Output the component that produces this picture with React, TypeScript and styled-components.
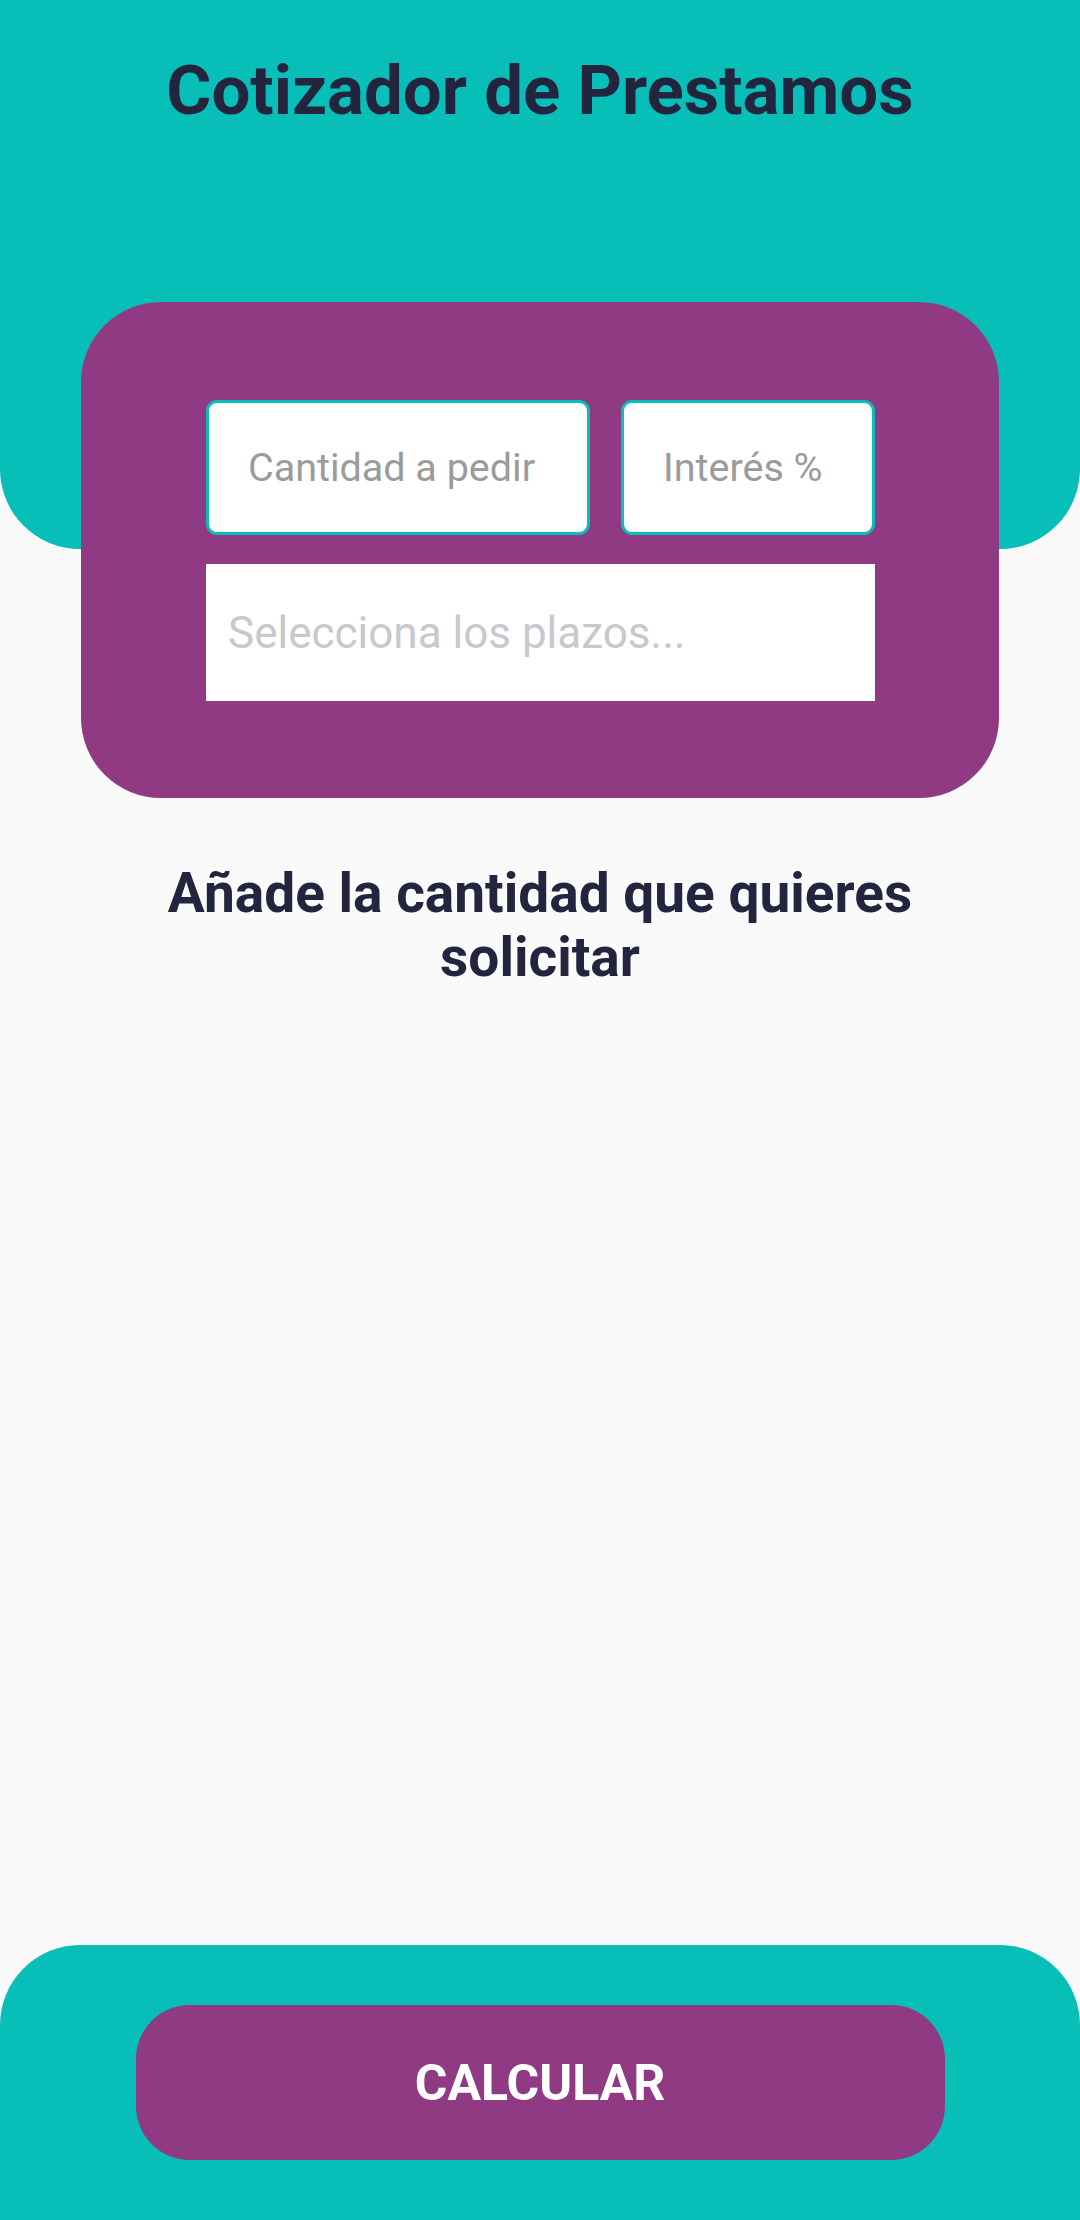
import React from "react";
import styled, { createGlobalStyle } from "styled-components";

const TEAL = "#08beb9";
const PURPLE = "#8f3a82";
const DARK = "#23243d";

const GlobalStyle = createGlobalStyle`
  html, body { margin: 0; padding: 0; background: #fafafa; }
  * { box-sizing: border-box; }
  body { font-family: Roboto, "Noto Sans", sans-serif; }
`;

const Page = styled.div`
  min-height: 2220px;
  display: flex;
  flex-direction: column;
  background: #fafafa;
`;

const Header = styled.header`
  height: 549px;
  background: ${TEAL};
  border-radius: 0 0 80px 80px;
  padding-top: 50px;
  display: flex;
  justify-content: center;
  align-items: flex-start;
`;

const Title = styled.h1`
  margin: 0;
  font-family: Roboto, sans-serif;
  font-weight: 700;
  font-size: 69px;
  line-height: normal;
  color: ${DARK};
`;

const Card = styled.section`
  margin: -247px 81px 0;
  position: relative;
  background: ${PURPLE};
  border-radius: 80px;
  padding: 98px 124px 97px 125px;
  display: flex;
  flex-direction: column;
  gap: 29px;
`;

const Row = styled.div`
  display: flex;
  gap: 31px;
`;

const Field = styled.input<{ $w: number }>`
  width: ${(p) => p.$w}px;
  height: 135px;
  border: 3px solid ${TEAL};
  border-radius: 11px;
  background: #fff;
  padding: 0 0 0 39px;
  font-family: Roboto, sans-serif;
  font-size: 39.5px;
  color: ${DARK};
  outline: none;
  &::placeholder { color: #9b9b9b; }
`;

const Picker = styled.div`
  height: 137px;
  background: #fff;
  display: flex;
  align-items: center;
  padding-left: 22px;
  font-family: Roboto, sans-serif;
  font-size: 44px;
  color: #c8c8ce;
`;

const Message = styled.h2`
  margin: 63px 150px 0;
  text-align: center;
  font-family: Roboto, sans-serif;
  font-weight: 700;
  font-size: 55px;
  line-height: 64px;
  color: ${DARK};
`;

const Footer = styled.footer`
  margin-top: auto;
  background: ${TEAL};
  border-radius: 80px 80px 0 0;
  padding: 60px 0;
  display: flex;
  justify-content: center;
`;

const Button = styled.button`
  width: 809px;
  height: 155px;
  border: none;
  border-radius: 54px;
  background: ${PURPLE};
  color: #fff;
  font-family: Roboto, sans-serif;
  font-weight: 700;
  font-size: 50px;
  cursor: pointer;
`;

export default function App() {
  return (
    <Page>
      <GlobalStyle />
      <Header>
        <Title>Cotizador de Prestamos</Title>
      </Header>
      <Card>
        <Row>
          <Field $w={384} placeholder="Cantidad a pedir" />
          <Field $w={254} placeholder="Interés %" />
        </Row>
        <Picker>Selecciona los plazos...</Picker>
      </Card>
      <Message>Añade la cantidad que quieres solicitar</Message>
      <Footer>
        <Button>CALCULAR</Button>
      </Footer>
    </Page>
  );
}
